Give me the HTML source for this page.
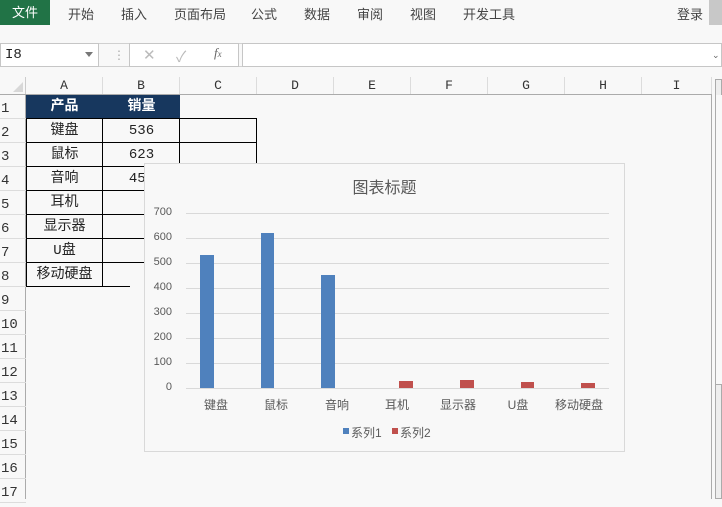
<!DOCTYPE html>
<html><head><meta charset="utf-8"><style>
*{margin:0;padding:0;box-sizing:border-box}
body{width:722px;height:499px;background:#f8f8f8;position:relative;overflow:hidden;font-family:"Liberation Sans","Noto Sans CJK SC",sans-serif;font-size:13px;color:#222}
.a{position:absolute}
.tab{position:absolute;top:4px;font-size:13px;color:#444}
.ch{position:absolute;top:77px;height:18px;border-right:1px solid #dcdcdc;text-align:center;font-family:"Liberation Mono","Noto Sans CJK SC",monospace;font-size:13px;color:#333;line-height:18px}
.rh{position:absolute;left:0;width:26px;height:24px;border-bottom:1px solid #dcdcdc;font-family:"Liberation Mono",monospace;font-size:14px;color:#333;line-height:28px;padding-left:1px}
.c{position:absolute;height:24px;line-height:24px;text-align:center;font-size:14px;font-family:"Liberation Mono","Noto Sans CJK SC",monospace}
.gl{position:absolute;left:186px;width:423px;height:1px;background:#d9d9d9}
.yl{position:absolute;width:30px;text-align:right;left:142px;font-size:11px;color:#595959}
.xl{position:absolute;top:396px;width:60px;text-align:center;font-size:12px;color:#595959}
</style></head><body>
<div class="a" style="left:0;top:0;width:50px;height:25px;background:#217346;color:#fff;font-size:13px;line-height:25px;text-align:center">文件</div>
<div class="tab" style="left:68px">开始</div>
<div class="tab" style="left:121px">插入</div>
<div class="tab" style="left:174px">页面布局</div>
<div class="tab" style="left:251px">公式</div>
<div class="tab" style="left:304px">数据</div>
<div class="tab" style="left:357px">审阅</div>
<div class="tab" style="left:410px">视图</div>
<div class="tab" style="left:463px">开发工具</div>
<div class="tab" style="left:677px">登录</div>
<div class="a" style="left:709px;top:0;width:13px;height:25px;background:#c8c8c8"></div>
<div class="a" style="left:0;top:43px;width:722px;height:1px;background:#d0d0d0"></div>
<div class="a" style="left:0;top:66px;width:722px;height:1px;background:#d0d0d0"></div>
<div class="a" style="left:0;top:43px;width:99px;height:24px;border:1px solid #c6c6c6;background:#fff;font-family:'Liberation Mono',monospace;font-size:14px;line-height:22px;padding-left:4px">I8</div>
<div class="a" style="left:85px;top:52px;width:0;height:0;border-left:4px solid transparent;border-right:4px solid transparent;border-top:5px solid #777"></div>
<div class="a" style="left:113px;top:48px;color:#aaa;font-size:12px">⋮</div>
<div class="a" style="left:129px;top:43px;width:110px;height:24px;border:1px solid #c6c6c6;background:#fff"></div>
<div class="a" style="left:143px;top:46px;color:#bbb;font-size:15px">✕</div>
<div class="a" style="left:176px;top:46px;color:#bbb;font-size:15px">✓</div>
<div class="a" style="left:214px;top:45px;color:#666;font-size:13px;font-style:italic;font-family:'Liberation Serif',serif">f<span style="font-size:9px">x</span></div>
<div class="a" style="left:242px;top:43px;width:480px;height:24px;border:1px solid #c6c6c6;background:#fff"></div>
<div class="a" style="left:712px;top:50px;color:#666;font-size:9px">⌄</div>
<!-- headers -->
<div class="a" style="left:0;top:77px;width:26px;height:18px;border-right:1px solid #ccc"></div>
<div class="a" style="left:13px;top:82px;width:0;height:0;border-left:10px solid transparent;border-bottom:10px solid #d8d8d8"></div>
<div class="ch" style="left:26px;width:77px">A</div>
<div class="ch" style="left:103px;width:77px">B</div>
<div class="ch" style="left:180px;width:77px">C</div>
<div class="ch" style="left:257px;width:77px">D</div>
<div class="ch" style="left:334px;width:77px">E</div>
<div class="ch" style="left:411px;width:77px">F</div>
<div class="ch" style="left:488px;width:77px">G</div>
<div class="ch" style="left:565px;width:77px">H</div>
<div class="ch" style="left:642px;width:70px">I</div>
<div class="a" style="left:0;top:94px;width:712px;height:1px;background:#ababab"></div>
<div class="a" style="left:25px;top:94px;width:1px;height:405px;background:#ababab"></div>
<div class="a" style="left:711px;top:94px;width:1px;height:405px;background:#ababab"></div>
<div class="a" style="left:715px;top:79px;width:7px;height:420px;background:#eee;border:1px solid #ababab"></div>
<div class="a" style="left:716px;top:95px;width:6px;height:290px;background:#f8f8f8;border-bottom:1px solid #ababab"></div>
<div class="rh" style="top:95px">1</div><div class="rh" style="top:119px">2</div><div class="rh" style="top:143px">3</div><div class="rh" style="top:167px">4</div><div class="rh" style="top:191px">5</div><div class="rh" style="top:215px">6</div><div class="rh" style="top:239px">7</div><div class="rh" style="top:263px">8</div><div class="rh" style="top:287px">9</div><div class="rh" style="top:311px">10</div><div class="rh" style="top:335px">11</div><div class="rh" style="top:359px">12</div><div class="rh" style="top:383px">13</div><div class="rh" style="top:407px">14</div><div class="rh" style="top:431px">15</div><div class="rh" style="top:455px">16</div><div class="rh" style="top:479px">17</div>
<!-- table -->
<div class="a" style="left:26px;top:95px;width:154px;height:24px;background:#17375e"></div>
<div class="c" style="left:26px;top:95px;width:77px;color:#fff;font-weight:bold">产品</div>
<div class="c" style="left:103px;top:95px;width:77px;color:#fff;font-weight:bold">销量</div>
<svg class="a" style="left:0;top:0" width="722" height="499">
<g stroke="#000" stroke-width="1" fill="none">
<path d="M26 118.5H257M26 142.5H257M26 166.5H180M26 190.5H180M26 214.5H180M26 238.5H180M26 262.5H180M26 286.5H130"/>
<path d="M102.5 119V287M179.5 119V287M256.5 119V163M26.5 119V287"/>
</g></svg>
<div class="c" style="left:26px;top:119px;width:77px">键盘</div><div class="c" style="left:103px;top:119px;width:77px">536</div>
<div class="c" style="left:26px;top:143px;width:77px">鼠标</div><div class="c" style="left:103px;top:143px;width:77px">623</div>
<div class="c" style="left:26px;top:167px;width:77px">音响</div><div class="c" style="left:103px;top:167px;width:77px">457</div>
<div class="c" style="left:26px;top:191px;width:77px">耳机</div>
<div class="c" style="left:26px;top:215px;width:77px">显示器</div>
<div class="c" style="left:26px;top:239px;width:77px">U盘</div>
<div class="c" style="left:26px;top:263px;width:77px">移动硬盘</div>
<!-- chart -->
<div class="a" style="left:144px;top:163px;width:481px;height:289px;background:#f8f8f8;border:1px solid #d9d9d9"></div>
<div class="a" style="left:144px;top:174px;width:481px;text-align:center;font-size:16px;color:#595959">图表标题</div>
<div class="gl" style="top:213px"></div><div class="gl" style="top:238px"></div><div class="gl" style="top:263px"></div><div class="gl" style="top:288px"></div><div class="gl" style="top:313px"></div><div class="gl" style="top:338px"></div><div class="gl" style="top:363px"></div><div class="gl" style="top:388px"></div>
<div class="yl" style="top:206px">700</div><div class="yl" style="top:231px">600</div><div class="yl" style="top:256px">500</div><div class="yl" style="top:281px">400</div><div class="yl" style="top:306px">300</div><div class="yl" style="top:331px">200</div><div class="yl" style="top:356px">100</div><div class="yl" style="top:381px">0</div>
<div class="a" style="left:200px;top:255px;width:14px;height:133px;background:#4f81bd"></div>
<div class="a" style="left:261px;top:233px;width:13px;height:155px;background:#4f81bd"></div>
<div class="a" style="left:321px;top:275px;width:14px;height:113px;background:#4f81bd"></div>
<div class="a" style="left:399px;top:381px;width:14px;height:7px;background:#c0504d"></div>
<div class="a" style="left:460px;top:380px;width:14px;height:8px;background:#c0504d"></div>
<div class="a" style="left:521px;top:382px;width:13px;height:6px;background:#c0504d"></div>
<div class="a" style="left:581px;top:383px;width:14px;height:5px;background:#c0504d"></div>
<div class="xl" style="left:186px">键盘</div><div class="xl" style="left:246px">鼠标</div><div class="xl" style="left:307px">音响</div><div class="xl" style="left:367px">耳机</div><div class="xl" style="left:428px">显示器</div><div class="xl" style="left:488px">U盘</div><div class="xl" style="left:549px">移动硬盘</div>
<div class="a" style="left:343px;top:428px;width:6px;height:6px;background:#4f81bd"></div>
<div class="a" style="left:351px;top:424px;font-size:12px;color:#595959">系列1</div>
<div class="a" style="left:392px;top:428px;width:6px;height:6px;background:#c0504d"></div>
<div class="a" style="left:400px;top:424px;font-size:12px;color:#595959">系列2</div>
</body></html>
